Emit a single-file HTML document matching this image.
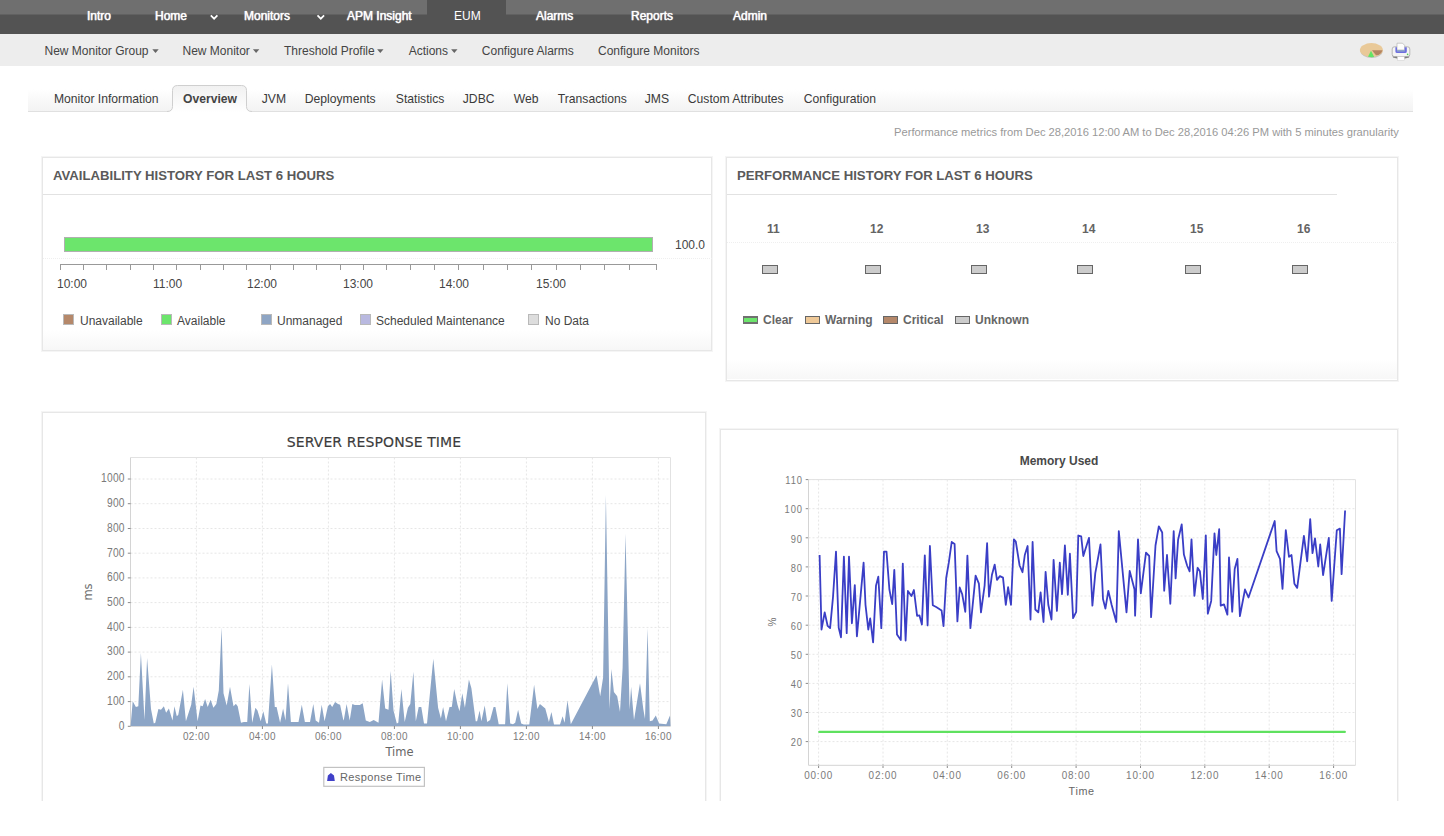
<!DOCTYPE html>
<html lang="en"><head><meta charset="utf-8"><title>Overview</title>
<style>
html,body{margin:0;padding:0;background:#fff;}
body{width:1444px;height:836px;overflow:hidden;position:relative;font-family:"Liberation Sans",sans-serif;font-size:12px;color:#333;}
.abs{position:absolute;white-space:nowrap;}
#topbar{position:absolute;left:0;top:0;width:1444px;height:34px;background:#535353;}
#topbar .lite{position:absolute;left:0;top:0;width:1444px;height:14px;background:#6f6f6f;border-bottom:1px solid #616161;}
#topbar .sel{position:absolute;left:427px;top:0;width:79px;height:34px;background:#535353;}
#topbar a{position:absolute;top:9px;-webkit-text-stroke:0.25px #fff;color:#fff;font-size:12px;line-height:14px;text-shadow:0 0 1px #fff;white-space:nowrap;}
#subnav{position:absolute;left:0;top:34px;width:1444px;height:32px;background:#ededed;}
#subnav a{position:absolute;top:10px;color:#444;font-size:12px;line-height:14px;white-space:nowrap;}
#subnav i{position:absolute;top:15.5px;margin-left:1px;width:0;height:0;border-left:3px solid transparent;border-right:3px solid transparent;border-top:3.5px solid #707070;}
#tabs{position:absolute;left:28px;top:89px;width:1385px;height:22px;background:linear-gradient(#ffffff,#f3f3f3);border-bottom:1px solid #e0e0e0;}
#tabs a{position:absolute;top:3px;color:#3a3a3a;font-size:12.15px;line-height:14px;white-space:nowrap;}
.panel{position:absolute;border:1px solid #e7e7e7;box-shadow:0 0 0 1px #f5f5f5;background:#fff;box-sizing:border-box;}
.ptitle{position:absolute;font-weight:bold;font-size:13.17px;color:#5a5a5a;line-height:16px;white-space:nowrap;}
.leg{position:absolute;font-size:12px;color:#454545;line-height:14px;white-space:nowrap;}
.legb{position:absolute;font-size:12px;font-weight:bold;color:#666;line-height:14px;white-space:nowrap;}
.sq{position:absolute;width:11px;height:11px;border:1px solid #b9b9b9;box-sizing:border-box;}
.bx{position:absolute;width:16px;height:9px;border:1px solid #666;background:#ccc;box-sizing:border-box;}
.hr{position:absolute;font-weight:bold;font-size:12px;color:#646464;line-height:14px;white-space:nowrap;}
.dot{position:absolute;height:0;border-top:1px dotted #efefef;}
svg{position:absolute;left:0;top:0;}
svg text{font-family:"DejaVu Sans","Liberation Sans",sans-serif;}
.grid{stroke:#e6e6e6;stroke-width:1;stroke-dasharray:2 2;}
.pb{fill:none;stroke:#e2e2e2;stroke-width:1;}
.ax{fill:none;stroke:#d4d4d4;stroke-width:1;}
.tk{stroke:#8a8a8a;stroke-width:1;}
.avt{stroke:#999;stroke-width:1;}
.yl{font-family:"Liberation Sans",sans-serif;font-size:12.5px;fill:#7a7a7a;letter-spacing:0.3px;}
.yr{font-family:"Liberation Sans",sans-serif;font-size:11.4px;fill:#7a7a7a;letter-spacing:1.2px;}
.xl{font-family:"Liberation Sans",sans-serif;font-size:11px;fill:#7a7a7a;letter-spacing:0.5px;}
.xr{font-family:"Liberation Sans",sans-serif;font-size:11px;fill:#7a7a7a;letter-spacing:0.9px;}

.fade{position:absolute;height:20px;background:linear-gradient(rgba(247,247,247,0),#f7f7f7);}
#tabs a+a{margin-left:0.8px;}

</style></head>
<body>
<div id="topbar"><div class="lite"></div><div class="sel"></div>
<a style="left:87px">Intro</a>
<a style="left:155px">Home</a>
<a style="left:244px">Monitors</a>
<a style="left:347px">APM Insight</a>
<a style="left:454px;text-shadow:none;-webkit-text-stroke:0;">EUM</a>
<a style="left:536px">Alarms</a>
<a style="left:631px">Reports</a>
<a style="left:733px">Admin</a>
</div>
<div id="subnav">
<a style="left:44.5px">New Monitor Group</a>
<a style="left:182.5px">New Monitor</a>
<a style="left:284px">Threshold Profile</a>
<a style="left:408.7px">Actions</a>
<a style="left:481.8px">Configure Alarms</a>
<a style="left:598px">Configure Monitors</a>
</div>
<div id="tabs">
<a style="left:26px">Monitor Information</a>
<a style="left:233px">JVM</a>
<a style="left:276px">Deployments</a>
<a style="left:367px">Statistics</a>
<a style="left:434px">JDBC</a>
<a style="left:485px">Web</a>
<a style="left:529px">Transactions</a>
<a style="left:616px">JMS</a>
<a style="left:659px">Custom Attributes</a>
<a style="left:775px">Configuration</a>
</div>
<svg id="tabsvg" width="1444" height="120" viewBox="0 0 1444 120">
<defs><linearGradient id="tg" x1="0" y1="0" x2="0" y2="1"><stop offset="0" stop-color="#f1f1f1"/><stop offset="1" stop-color="#ffffff"/></linearGradient></defs>
<path d="M167,112.5 V111.5 Q172.5,111.5 172.5,106.5 V90.5 Q172.5,85.5 177.5,85.5 H241.5 Q246.5,85.5 246.5,90.5 V106.5 Q246.5,111.5 252,111.5 V112.5 Z" fill="url(#tg)"/>
<path d="M167,111.5 Q172.5,111.5 172.5,106.5 V90.5 Q172.5,85.5 177.5,85.5 H241.5 Q246.5,85.5 246.5,90.5 V106.5 Q246.5,111.5 252,111.5" fill="none" stroke="#cfcfcf" stroke-width="1"/>
</svg>
<div class="abs" style="left:183px;top:92px;font-weight:bold;font-size:12.15px;line-height:14px;color:#444;">Overview</div>
<div class="abs" id="perf" style="left:894px;top:126px;font-size:11.18px;line-height:13px;color:#999;">Performance metrics from Dec 28,2016 12:00 AM to Dec 28,2016 04:26 PM with 5 minutes granularity</div>

<!-- availability panel -->
<div class="panel" style="left:42px;top:157px;width:670px;height:194px;"></div>
<div class="abs" style="left:43px;top:194px;width:668px;height:1px;background:#e2e2e2;"></div>
<div class="fade" style="left:43px;top:330px;width:668px;"></div>
<div class="ptitle" style="left:53px;top:168px;">AVAILABILITY HISTORY FOR LAST 6 HOURS</div>
<div class="abs" style="left:63.5px;top:237px;width:589px;height:14.5px;background:#6ce56c;border:1px solid #b0b0b0;box-sizing:border-box;"></div>
<div class="dot" style="left:43px;top:258px;width:669px;"></div>
<div class="leg" style="left:675px;top:238px;">100.0</div>
<div class="leg" style="left:57px;top:276.5px;">10:00</div>
<div class="leg" style="left:153px;top:276.5px;">11:00</div>
<div class="leg" style="left:247px;top:276.5px;">12:00</div>
<div class="leg" style="left:343px;top:276.5px;">13:00</div>
<div class="leg" style="left:439px;top:276.5px;">14:00</div>
<div class="leg" style="left:536px;top:276.5px;">15:00</div>
<div class="sq" style="left:63px;top:314px;background:#b5886a;"></div><div class="leg" style="left:80px;top:314px;">Unavailable</div>
<div class="sq" style="left:161px;top:314px;background:#6ce56c;"></div><div class="leg" style="left:177px;top:314px;">Available</div>
<div class="sq" style="left:261px;top:314px;background:#8ea5c4;"></div><div class="leg" style="left:277px;top:314px;">Unmanaged</div>
<div class="sq" style="left:360px;top:314px;background:#b9b9e0;"></div><div class="leg" style="left:376px;top:314px;">Scheduled Maintenance</div>
<div class="sq" style="left:528px;top:314px;background:#dddddd;"></div><div class="leg" style="left:545px;top:314px;">No Data</div>

<!-- performance panel -->
<div class="panel" style="left:726px;top:157px;width:672px;height:224px;"></div>
<div class="abs" style="left:727px;top:194px;width:610px;height:1px;background:#e2e2e2;"></div>
<div class="fade" style="left:727px;top:359px;width:670px;"></div>
<div class="ptitle" style="left:737px;top:168px;">PERFORMANCE HISTORY FOR LAST 6 HOURS</div>
<div class="dot" style="left:727px;top:242px;width:671px;"></div>
<div class="hr" style="left:767px;top:222px;">11</div><div class="bx" style="left:762px;top:265px;"></div>
<div class="hr" style="left:870px;top:222px;">12</div><div class="bx" style="left:865px;top:265px;"></div>
<div class="hr" style="left:976px;top:222px;">13</div><div class="bx" style="left:971px;top:265px;"></div>
<div class="hr" style="left:1082px;top:222px;">14</div><div class="bx" style="left:1077px;top:265px;"></div>
<div class="hr" style="left:1190px;top:222px;">15</div><div class="bx" style="left:1185px;top:265px;"></div>
<div class="hr" style="left:1297px;top:222px;">16</div><div class="bx" style="left:1292px;top:265px;"></div>
<div class="bx" style="left:743px;top:316px;height:8px;width:15px;background:#6ce56c;border-width:2px 1.5px;border-color:#707070;"></div><div class="legb" style="left:763px;top:313px;">Clear</div>
<div class="bx" style="left:805px;top:316px;height:8px;width:15px;background:#efc998;"></div><div class="legb" style="left:825px;top:313px;">Warning</div>
<div class="bx" style="left:883px;top:316px;height:8px;width:15px;background:#b5886a;"></div><div class="legb" style="left:903px;top:313px;">Critical</div>
<div class="bx" style="left:955px;top:316px;height:8px;width:15px;background:#cccccc;"></div><div class="legb" style="left:975px;top:313px;">Unknown</div>

<!-- chart panels -->
<div class="panel" style="left:42px;top:412px;width:664px;height:400px;border-bottom:none;"></div>
<div class="panel" style="left:720px;top:429px;width:678px;height:380px;border-bottom:none;"></div>

<svg width="1444" height="836" viewBox="0 0 1444 836">
<!-- header icons -->
<polygon points="152.3,49.3 158.7,49.3 155.5,52.9" fill="#666"/>
<polygon points="252.9,49.3 259.3,49.3 256.1,52.9" fill="#666"/>
<polygon points="377.1,49.3 383.5,49.3 380.3,52.9" fill="#666"/>
<polygon points="451.1,49.3 457.5,49.3 454.3,52.9" fill="#666"/>
<polyline points="210.8,15.4 214.1,18.7 217.4,15.4" fill="none" stroke="#fff" stroke-width="1.7"/>
<polyline points="317.5,15.4 320.8,18.7 324.1,15.4" fill="none" stroke="#fff" stroke-width="1.7"/>
<ellipse cx="1371.6" cy="51.4" rx="11" ry="6.6" fill="#c4c4c4"/>
<ellipse cx="1371.4" cy="50.1" rx="11.5" ry="7" fill="#e9c998"/>
<path d="M1372,50.2 H1382.6 Q1382,53 1378.5,55 L1376,55.3 Z" fill="#b48563"/>
<path d="M1371,50.8 L1374.2,57 Q1371,57.4 1368,56.7 Z" fill="#62e566"/>
<!-- printer -->
<path d="M1393,57.5 Q1401,60 1409,57.5 L1409.5,55 H1392.5 Z" fill="#555" opacity="0.75"/>
<rect x="1392.2" y="46.8" width="17.6" height="9.8" rx="2.2" fill="#f4f4f4" stroke="#a8a8a8" stroke-width="0.8"/>
<path d="M1397,50 V43.2 H1402.5 L1404.6,45.3 V50 Z" fill="#fdfdfd" stroke="#b5b5b5" stroke-width="0.7"/>
<path d="M1395.4,47.3 H1397 V50 H1404.6 V47.3 H1406.8 V51.5 Q1406.8,53 1405,53 H1397.2 Q1395.4,53 1395.4,51.5 Z" fill="#6d6fe0"/>
<rect x="1397" y="50" width="7.8" height="1.6" fill="#8fa5c8"/>
<rect x="1397.4" y="56.6" width="6.9" height="3.6" fill="#fff" stroke="#ccc" stroke-width="0.5"/>
<circle cx="1407.6" cy="54.4" r="0.8" fill="#4fd34f"/>
<path d="M60,264.5 H657" fill="none" stroke="#999" stroke-width="1"/>
<line x1="60.5" y1="264" x2="60.5" y2="270" class="avt"/>
<line x1="83.5" y1="264" x2="83.5" y2="270" class="avt"/>
<line x1="106.5" y1="264" x2="106.5" y2="270" class="avt"/>
<line x1="130.5" y1="264" x2="130.5" y2="270" class="avt"/>
<line x1="153.5" y1="264" x2="153.5" y2="270" class="avt"/>
<line x1="176.5" y1="264" x2="176.5" y2="270" class="avt"/>
<line x1="200.5" y1="264" x2="200.5" y2="270" class="avt"/>
<line x1="223.5" y1="264" x2="223.5" y2="270" class="avt"/>
<line x1="246.5" y1="264" x2="246.5" y2="270" class="avt"/>
<line x1="270.5" y1="264" x2="270.5" y2="270" class="avt"/>
<line x1="293.5" y1="264" x2="293.5" y2="270" class="avt"/>
<line x1="316.5" y1="264" x2="316.5" y2="270" class="avt"/>
<line x1="340.5" y1="264" x2="340.5" y2="270" class="avt"/>
<line x1="363.5" y1="264" x2="363.5" y2="270" class="avt"/>
<line x1="386.5" y1="264" x2="386.5" y2="270" class="avt"/>
<line x1="410.5" y1="264" x2="410.5" y2="270" class="avt"/>
<line x1="434.5" y1="264" x2="434.5" y2="270" class="avt"/>
<line x1="458.5" y1="264" x2="458.5" y2="270" class="avt"/>
<line x1="483.5" y1="264" x2="483.5" y2="270" class="avt"/>
<line x1="507.5" y1="264" x2="507.5" y2="270" class="avt"/>
<line x1="531.5" y1="264" x2="531.5" y2="270" class="avt"/>
<line x1="556.5" y1="264" x2="556.5" y2="270" class="avt"/>
<line x1="580.5" y1="264" x2="580.5" y2="270" class="avt"/>
<line x1="604.5" y1="264" x2="604.5" y2="270" class="avt"/>
<line x1="629.5" y1="264" x2="629.5" y2="270" class="avt"/>
<line x1="656.5" y1="264" x2="656.5" y2="270" class="avt"/>
<!-- left chart -->
<line x1="130.5" y1="701.6" x2="670.5" y2="701.6" class="grid"/>
<line x1="130.5" y1="676.8" x2="670.5" y2="676.8" class="grid"/>
<line x1="130.5" y1="652.1" x2="670.5" y2="652.1" class="grid"/>
<line x1="130.5" y1="627.4" x2="670.5" y2="627.4" class="grid"/>
<line x1="130.5" y1="602.6" x2="670.5" y2="602.6" class="grid"/>
<line x1="130.5" y1="577.9" x2="670.5" y2="577.9" class="grid"/>
<line x1="130.5" y1="553.2" x2="670.5" y2="553.2" class="grid"/>
<line x1="130.5" y1="528.5" x2="670.5" y2="528.5" class="grid"/>
<line x1="130.5" y1="503.7" x2="670.5" y2="503.7" class="grid"/>
<line x1="130.5" y1="479" x2="670.5" y2="479" class="grid"/>
<line x1="196.4" y1="457.5" x2="196.4" y2="726.4" class="grid"/>
<line x1="262.4" y1="457.5" x2="262.4" y2="726.4" class="grid"/>
<line x1="328.4" y1="457.5" x2="328.4" y2="726.4" class="grid"/>
<line x1="394.4" y1="457.5" x2="394.4" y2="726.4" class="grid"/>
<line x1="460.4" y1="457.5" x2="460.4" y2="726.4" class="grid"/>
<line x1="526.4" y1="457.5" x2="526.4" y2="726.4" class="grid"/>
<line x1="592.4" y1="457.5" x2="592.4" y2="726.4" class="grid"/>
<line x1="658.4" y1="457.5" x2="658.4" y2="726.4" class="grid"/>
<path d="M130.5,457.5 H670.5 V726.4" class="pb"/>
<path d="M130.5,457.5 V726.4 H670.5" class="ax"/>
<line x1="127.8" y1="726.3" x2="130.6" y2="726.3" class="tk"/>
<text transform="translate(124.8,729.6) scale(0.82,1)" class="yl" text-anchor="end">0</text>
<line x1="127.8" y1="701.6" x2="130.6" y2="701.6" class="tk"/>
<text transform="translate(124.8,704.9) scale(0.82,1)" class="yl" text-anchor="end">100</text>
<line x1="127.8" y1="676.8" x2="130.6" y2="676.8" class="tk"/>
<text transform="translate(124.8,680.1) scale(0.82,1)" class="yl" text-anchor="end">200</text>
<line x1="127.8" y1="652.1" x2="130.6" y2="652.1" class="tk"/>
<text transform="translate(124.8,655.4) scale(0.82,1)" class="yl" text-anchor="end">300</text>
<line x1="127.8" y1="627.4" x2="130.6" y2="627.4" class="tk"/>
<text transform="translate(124.8,630.7) scale(0.82,1)" class="yl" text-anchor="end">400</text>
<line x1="127.8" y1="602.6" x2="130.6" y2="602.6" class="tk"/>
<text transform="translate(124.8,605.9) scale(0.82,1)" class="yl" text-anchor="end">500</text>
<line x1="127.8" y1="577.9" x2="130.6" y2="577.9" class="tk"/>
<text transform="translate(124.8,581.2) scale(0.82,1)" class="yl" text-anchor="end">600</text>
<line x1="127.8" y1="553.2" x2="130.6" y2="553.2" class="tk"/>
<text transform="translate(124.8,556.5) scale(0.82,1)" class="yl" text-anchor="end">700</text>
<line x1="127.8" y1="528.5" x2="130.6" y2="528.5" class="tk"/>
<text transform="translate(124.8,531.8) scale(0.82,1)" class="yl" text-anchor="end">800</text>
<line x1="127.8" y1="503.7" x2="130.6" y2="503.7" class="tk"/>
<text transform="translate(124.8,507) scale(0.82,1)" class="yl" text-anchor="end">900</text>
<line x1="127.8" y1="479" x2="130.6" y2="479" class="tk"/>
<text transform="translate(124.8,482.3) scale(0.82,1)" class="yl" text-anchor="end">1000</text>
<line x1="196.4" y1="726" x2="196.4" y2="729" class="tk"/>
<text transform="translate(196.4,740.2) scale(0.9,1)" class="xl" text-anchor="middle">02:00</text>
<line x1="262.4" y1="726" x2="262.4" y2="729" class="tk"/>
<text transform="translate(262.4,740.2) scale(0.9,1)" class="xl" text-anchor="middle">04:00</text>
<line x1="328.4" y1="726" x2="328.4" y2="729" class="tk"/>
<text transform="translate(328.4,740.2) scale(0.9,1)" class="xl" text-anchor="middle">06:00</text>
<line x1="394.4" y1="726" x2="394.4" y2="729" class="tk"/>
<text transform="translate(394.4,740.2) scale(0.9,1)" class="xl" text-anchor="middle">08:00</text>
<line x1="460.4" y1="726" x2="460.4" y2="729" class="tk"/>
<text transform="translate(460.4,740.2) scale(0.9,1)" class="xl" text-anchor="middle">10:00</text>
<line x1="526.4" y1="726" x2="526.4" y2="729" class="tk"/>
<text transform="translate(526.4,740.2) scale(0.9,1)" class="xl" text-anchor="middle">12:00</text>
<line x1="592.4" y1="726" x2="592.4" y2="729" class="tk"/>
<text transform="translate(592.4,740.2) scale(0.9,1)" class="xl" text-anchor="middle">14:00</text>
<line x1="658.4" y1="726" x2="658.4" y2="729" class="tk"/>
<text transform="translate(658.4,740.2) scale(0.9,1)" class="xl" text-anchor="middle">16:00</text>
<text x="374" y="446.6" text-anchor="middle" style="font-size:14px;fill:#3c3c3c;stroke:#3c3c3c;stroke-width:0.15;letter-spacing:0.1px;">SERVER RESPONSE TIME</text>
<text transform="translate(92,592) rotate(-90)" text-anchor="middle" style="font-size:11.5px;fill:#707070;">ms</text>
<text x="399.5" y="756" text-anchor="middle" style="font-size:11.5px;fill:#666;">Time</text>
<path d="M130.5,726 L130.6,726 L132.7,701.2 L135.9,706.9 L138.3,706.2 L140.9,653.1 L144.5,719.9 L147.1,658.1 L151,709.1 L153.8,723.4 L155.3,722.7 L158.4,709.1 L161,709.8 L163.9,706.2 L166.1,712.7 L168.9,708.4 L172.5,720.6 L174.4,706.2 L176.8,716.3 L178.3,714.8 L182.9,689.7 L185.9,721.3 L191.2,704.8 L193.6,686.8 L197.6,721.3 L200.5,705.5 L202.7,706.2 L205.1,699 L207.7,706.9 L210.6,699.8 L213.4,707.7 L216.3,704.1 L218.8,690.4 L221.6,627.2 L223.5,693.3 L226.7,705.5 L230,686.8 L233.5,706.2 L235.7,704.1 L236,704.1 L237.7,706.2 L241,722.7 L243.9,722 L247.2,722 L249.4,684 L252.2,722.7 L255.4,707.7 L257.5,710.5 L260.7,721.3 L263.3,711.2 L266.2,723.4 L267.9,723.4 L271.9,664.6 L274.8,706.9 L276.6,706.9 L280.1,722.7 L283.1,708.4 L285.5,720.6 L288,683.2 L290.9,722 L298.5,722 L301.8,704.8 L304.9,722 L310,722 L313.3,704.1 L315.7,720.6 L319,722.7 L321.7,704.8 L324.6,721.3 L327.9,706.2 L330.1,704.1 L332.2,706.9 L335.1,701.9 L338,704.1 L340.1,704.8 L343.4,720.6 L344,719.1 L346.6,704.1 L349.7,720.6 L352.3,704.1 L354.8,705.1 L359.8,705.1 L362.7,703.3 L365.8,720.6 L369.8,722 L373.7,719.9 L378.5,722.7 L382.1,679.6 L385.2,708.4 L388.5,709.8 L390.7,671 L393.5,710.5 L396.8,723.4 L398.3,722.7 L401.4,689 L404.7,722 L407.9,707.7 L410.3,704.1 L413.4,671.7 L415.8,721.3 L418.7,706.9 L421.3,706.9 L424,723.4 L427,723.4 L433.3,658.8 L438.1,707.7 L440.9,718.4 L443.1,706.9 L446,721.3 L449.5,706.9 L451.7,706.9 L452,705.5 L454.2,689 L457.5,704.8 L459.5,711.2 L462.3,693.3 L464.9,707.7 L468.9,679.6 L471.4,688.3 L475.7,721.3 L477.1,721.3 L479.6,710.5 L481.4,721.3 L484.7,705.5 L487.2,722 L490.1,719.9 L493.6,706.9 L495.4,706.9 L498.7,724.2 L505.1,724.2 L507.3,683.2 L510.2,723.4 L513,724.2 L515.2,722.7 L518.1,709.8 L521.2,723.4 L523.8,724.5 L529.3,724.5 L534.1,684.7 L537.4,709.1 L539.9,704.1 L545.3,708.4 L548.9,722 L551.4,712 L554,724.5 L559.7,724.5 L560,724.5 L562.6,716.3 L564.6,722.7 L567.5,700.5 L570.8,724.2 L596.6,675.3 L600.2,696.2 L603.1,677.5 L605.9,495 L609.5,709.1 L611.4,668.9 L613.9,691.9 L617.2,696.2 L620,712 L622.6,668 L625.5,533.8 L629.6,709.8 L631.1,686.8 L634,719.9 L640,683.2 L643.3,709.1 L645,719.1 L647.6,628 L649.8,721.3 L652.6,720.6 L655.8,715.5 L659.1,723.4 L666.3,724.2 L670,715.5 L670.5,726 Z" fill="#8ca5c6"/>
<rect x="323.8" y="767.4" width="100.6" height="18.9" fill="#fff" stroke="#c2c2c2" stroke-width="1.2"/>
<path d="M327.1,781 L327.9,775.4 L330.9,773.1 L334,775.4 L334.8,781 Z" fill="#4040c8"/>
<text x="340" y="780.5" style="font-family:'Liberation Sans',sans-serif;font-size:11px;fill:#666;letter-spacing:0.4px;">Response Time</text>
<!-- right chart -->
<line x1="808.5" y1="741.6" x2="1355.5" y2="741.6" class="grid"/>
<line x1="805.7" y1="741.6" x2="808.6" y2="741.6" class="tk"/>
<text transform="translate(803,746.3) scale(0.82,1)" class="yr" text-anchor="end">20</text>
<line x1="808.5" y1="712.5" x2="1355.5" y2="712.5" class="grid"/>
<line x1="805.7" y1="712.5" x2="808.6" y2="712.5" class="tk"/>
<text transform="translate(803,717.2) scale(0.82,1)" class="yr" text-anchor="end">30</text>
<line x1="808.5" y1="683.4" x2="1355.5" y2="683.4" class="grid"/>
<line x1="805.7" y1="683.4" x2="808.6" y2="683.4" class="tk"/>
<text transform="translate(803,688.1) scale(0.82,1)" class="yr" text-anchor="end">40</text>
<line x1="808.5" y1="654.3" x2="1355.5" y2="654.3" class="grid"/>
<line x1="805.7" y1="654.3" x2="808.6" y2="654.3" class="tk"/>
<text transform="translate(803,659) scale(0.82,1)" class="yr" text-anchor="end">50</text>
<line x1="808.5" y1="625.2" x2="1355.5" y2="625.2" class="grid"/>
<line x1="805.7" y1="625.2" x2="808.6" y2="625.2" class="tk"/>
<text transform="translate(803,629.9) scale(0.82,1)" class="yr" text-anchor="end">60</text>
<line x1="808.5" y1="596" x2="1355.5" y2="596" class="grid"/>
<line x1="805.7" y1="596" x2="808.6" y2="596" class="tk"/>
<text transform="translate(803,600.8) scale(0.82,1)" class="yr" text-anchor="end">70</text>
<line x1="808.5" y1="566.9" x2="1355.5" y2="566.9" class="grid"/>
<line x1="805.7" y1="566.9" x2="808.6" y2="566.9" class="tk"/>
<text transform="translate(803,571.6) scale(0.82,1)" class="yr" text-anchor="end">80</text>
<line x1="808.5" y1="537.8" x2="1355.5" y2="537.8" class="grid"/>
<line x1="805.7" y1="537.8" x2="808.6" y2="537.8" class="tk"/>
<text transform="translate(803,542.5) scale(0.82,1)" class="yr" text-anchor="end">90</text>
<line x1="808.5" y1="508.7" x2="1355.5" y2="508.7" class="grid"/>
<line x1="805.7" y1="508.7" x2="808.6" y2="508.7" class="tk"/>
<text transform="translate(803,513.4) scale(0.82,1)" class="yr" text-anchor="end">100</text>
<line x1="808.5" y1="479.6" x2="1355.5" y2="479.6" class="grid"/>
<line x1="805.7" y1="479.6" x2="808.6" y2="479.6" class="tk"/>
<text transform="translate(803,484.3) scale(0.82,1)" class="yr" text-anchor="end">110</text>
<line x1="818.6" y1="479.6" x2="818.6" y2="765.3" class="grid"/>
<line x1="818.6" y1="764.5" x2="818.6" y2="768" class="tk"/>
<text transform="translate(818.6,779.3) scale(0.9,1)" class="xr" text-anchor="middle">00:00</text>
<line x1="883" y1="479.6" x2="883" y2="765.3" class="grid"/>
<line x1="883" y1="764.5" x2="883" y2="768" class="tk"/>
<text transform="translate(883,779.3) scale(0.9,1)" class="xr" text-anchor="middle">02:00</text>
<line x1="947.3" y1="479.6" x2="947.3" y2="765.3" class="grid"/>
<line x1="947.3" y1="764.5" x2="947.3" y2="768" class="tk"/>
<text transform="translate(947.3,779.3) scale(0.9,1)" class="xr" text-anchor="middle">04:00</text>
<line x1="1011.7" y1="479.6" x2="1011.7" y2="765.3" class="grid"/>
<line x1="1011.7" y1="764.5" x2="1011.7" y2="768" class="tk"/>
<text transform="translate(1011.7,779.3) scale(0.9,1)" class="xr" text-anchor="middle">06:00</text>
<line x1="1076.1" y1="479.6" x2="1076.1" y2="765.3" class="grid"/>
<line x1="1076.1" y1="764.5" x2="1076.1" y2="768" class="tk"/>
<text transform="translate(1076.1,779.3) scale(0.9,1)" class="xr" text-anchor="middle">08:00</text>
<line x1="1140.5" y1="479.6" x2="1140.5" y2="765.3" class="grid"/>
<line x1="1140.5" y1="764.5" x2="1140.5" y2="768" class="tk"/>
<text transform="translate(1140.5,779.3) scale(0.9,1)" class="xr" text-anchor="middle">10:00</text>
<line x1="1204.8" y1="479.6" x2="1204.8" y2="765.3" class="grid"/>
<line x1="1204.8" y1="764.5" x2="1204.8" y2="768" class="tk"/>
<text transform="translate(1204.8,779.3) scale(0.9,1)" class="xr" text-anchor="middle">12:00</text>
<line x1="1269.2" y1="479.6" x2="1269.2" y2="765.3" class="grid"/>
<line x1="1269.2" y1="764.5" x2="1269.2" y2="768" class="tk"/>
<text transform="translate(1269.2,779.3) scale(0.9,1)" class="xr" text-anchor="middle">14:00</text>
<line x1="1333.6" y1="479.6" x2="1333.6" y2="765.3" class="grid"/>
<line x1="1333.6" y1="764.5" x2="1333.6" y2="768" class="tk"/>
<text transform="translate(1333.6,779.3) scale(0.9,1)" class="xr" text-anchor="middle">16:00</text>
<path d="M808.5,479.6 H1355.5 V765.3" class="pb"/>
<path d="M808.5,479.6 V765.3 H1355.5" class="ax"/>
<text x="1059" y="465" text-anchor="middle" style="font-family:'Liberation Sans',sans-serif;font-weight:bold;font-size:12px;fill:#484848;">Memory Used</text>
<text transform="translate(775.6,622) rotate(-90)" text-anchor="middle" style="font-family:'Liberation Sans',sans-serif;font-size:10px;fill:#707070;">%</text>
<text x="1081.6" y="794.5" text-anchor="middle" style="font-family:'Liberation Sans',sans-serif;font-size:10.8px;fill:#666;letter-spacing:0.6px;">Time</text>
<path d="M819.6,555 L821.5,629.6 L824.7,612.4 L827.6,625.8 L830.1,628.1 L833,597.1 L836,551.6 L838.7,627.7 L841,637.3 L843.9,556.6 L846.7,633.1 L849,556.6 L851.9,623.3 L854.8,585.1 L856.9,636.3 L863.6,562.7 L865.5,604.8 L868.3,629.6 L870.2,618.5 L873.1,642.4 L876,585.6 L878.3,576.6 L881.3,628.1 L884,551.6 L886.5,551.6 L889.4,589.5 L892.2,604.2 L894.3,569.8 L897,634.4 L900.8,640.1 L902.8,563.6 L905.6,640.5 L907.9,591 L911.4,596.1 L913.9,590 L917.1,615.8 L919.4,615.3 L921.9,624.5 L924.8,555.4 L927.6,625.4 L929.9,546 L932.8,605.3 L936.2,607 L941.6,610.5 L943.5,626.2 L946.2,578 L948.8,562.7 L951.7,542 L954.6,544.1 L957.4,621.4 L959.7,587.5 L962.2,594.2 L965.3,611.8 L967.4,555.6 L970.4,628.1 L975.6,575.7 L978.9,583.7 L981,612.4 L984.6,585.6 L987.1,543.2 L989,596.7 L991.9,575.1 L994.7,564.6 L997,579.9 L999.9,576.1 L1003,577.6 L1005.8,604.8 L1008.1,587.2 L1011,604.8 L1013.9,539.3 L1015.8,541.6 L1019.6,565.5 L1022.5,572.2 L1024.8,555 L1027.6,546 L1030.5,619.5 L1032.6,542 L1035.3,609.5 L1038.3,612.4 L1040.6,592.3 L1043.5,622 L1045.6,571.9 L1048.3,604.8 L1051.5,619.5 L1053.6,559.8 L1056.9,610.9 L1059.8,562.7 L1062,594.2 L1064.9,545.5 L1067.8,594.8 L1069.9,553.7 L1073.1,618.1 L1076.2,611.8 L1078.3,535.5 L1081.2,536.3 L1083.3,556 L1089,537.8 L1092.4,605.7 L1095.3,573.2 L1100.5,544.5 L1103,599 L1105.4,608.6 L1108.3,590.8 L1111.6,604.8 L1116.3,622 L1118.8,531.1 L1126.5,612.4 L1129.7,570.9 L1134.5,589.5 L1135.1,615.7 L1138,539.3 L1140.8,593.3 L1146,552.7 L1149.2,556 L1151.1,617.2 L1155.5,545.5 L1158.8,526.3 L1162.2,532.5 L1164.2,590.8 L1167,555 L1170.3,603.8 L1173.7,531.1 L1175.6,578.4 L1178.1,539.7 L1181.7,524.4 L1183.9,554.6 L1187.1,565.5 L1189.6,571.3 L1191.5,539.3 L1194.4,595.8 L1197.6,567.8 L1199.9,571.3 L1202.8,599 L1205.8,535.3 L1207.8,613.7 L1211.2,600.9 L1214.5,533.4 L1216.3,555 L1219.2,529.2 L1220.7,605.7 L1224,604.4 L1227.4,614.7 L1229,557.5 L1232.2,611.8 L1234.7,569 L1237.4,558.9 L1239.9,616.2 L1245,589.5 L1248.5,597.5 L1274.7,521 L1276.6,551.2 L1280,558.9 L1282.5,588.9 L1285.8,530.2 L1289,556.9 L1291.5,555 L1294.4,583.7 L1297.2,587.9 L1303.9,535.9 L1307.2,561.3 L1310.2,519.1 L1312.5,553.1 L1315,538.4 L1318.3,566.5 L1320.2,544.5 L1323.1,575.1 L1328.8,537.8 L1331.7,600.9 L1336.8,530.2 L1339.9,528.6 L1341.6,574.2 L1345.1,510.5" fill="none" stroke="#3a3ec6" stroke-width="1.8" stroke-linejoin="round"/>
<path d="M819.3,731.9 H1344.8" stroke="#5fe15f" stroke-width="2.3" stroke-linecap="round"/>
</svg>
<div class="abs" style="left:0;top:801px;width:1444px;height:35px;background:#fff;"></div>

</body></html>
